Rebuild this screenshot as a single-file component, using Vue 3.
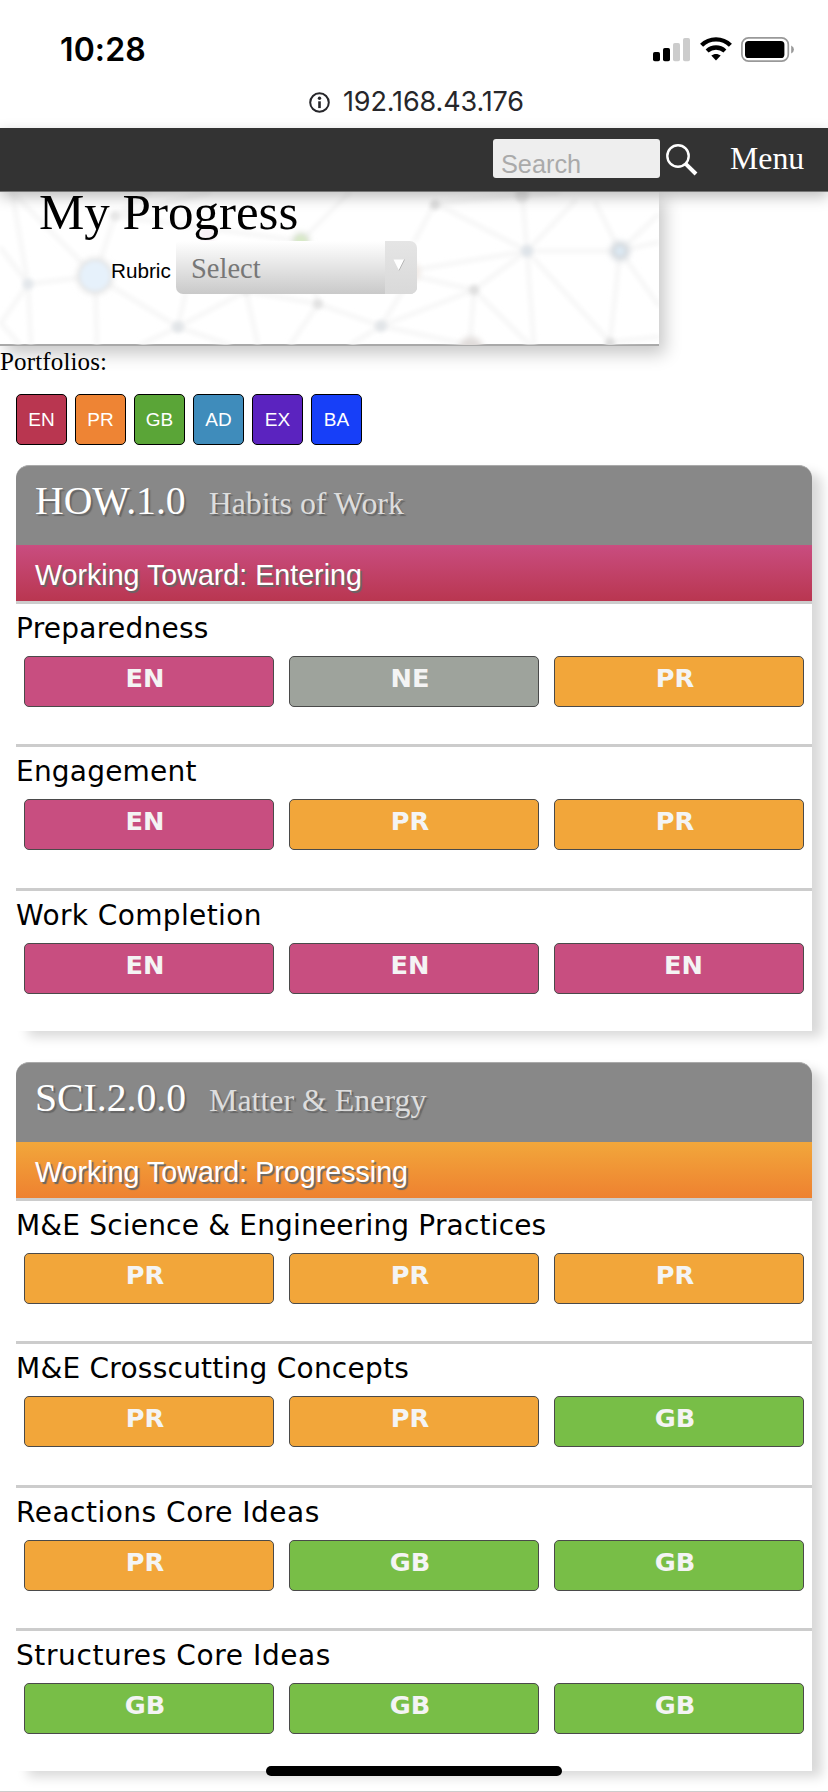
<script setup>
const portfolios = [
  { code: 'EN', tone: 'crimson' },
  { code: 'PR', tone: 'orange' },
  { code: 'GB', tone: 'green' },
  { code: 'AD', tone: 'blue' },
  { code: 'EX', tone: 'purple' },
  { code: 'BA', tone: 'royal' },
]

const cards = [
  {
    code: 'HOW.1.0',
    name: 'Habits of Work',
    goal: 'Working Toward: Entering',
    tone: 'entering',
    rows: [
      { label: 'Preparedness', tracking: 0.26, marks: ['EN', 'NE', 'PR'] },
      { label: 'Engagement', tracking: 0.2, marks: ['EN', 'PR', 'PR'] },
      { label: 'Work Completion', tracking: 0.38, marks: ['EN', 'EN', 'EN'], lastShifted: true },
    ],
  },
  {
    code: 'SCI.2.0.0',
    name: 'Matter & Energy',
    goal: 'Working Toward: Progressing',
    tone: 'progressing',
    rows: [
      { label: 'M&E Science & Engineering Practices', tracking: 0.18, marks: ['PR', 'PR', 'PR'] },
      { label: 'M&E Crosscutting Concepts', tracking: 0.24, marks: ['PR', 'PR', 'GB'] },
      { label: 'Reactions Core Ideas', tracking: 0.5, marks: ['PR', 'GB', 'GB'] },
      { label: 'Structures Core Ideas', tracking: 0.6, marks: ['GB', 'GB', 'GB'] },
    ],
  },
]
</script>

<template>
  <div class="screen">
    <header class="status">
      <span class="clock">10:28</span>
      <div class="indicators">
        <svg width="38" height="24" viewBox="0 0 38 24">
          <rect x="0" y="14" width="7" height="9.3" rx="1.8" />
          <rect x="10" y="10" width="7" height="13.3" rx="1.8" />
          <rect x="20" y="5" width="7" height="18.3" rx="1.8" fill="#ccc" />
          <rect x="30" y="0" width="7" height="23.3" rx="1.8" fill="#ccc" />
        </svg>
        <svg class="wifi" width="32" height="24" viewBox="0 0 32 24">
          <g fill="none" stroke="#000" stroke-width="4.3">
            <path d="M1.6 8.2 C9.5 .3 22.5 .3 30.4 8.2" />
            <path d="M7.1 14 C12.2 9.3 19.8 9.3 24.9 14" />
          </g>
          <path d="M11.3 18.6 C14 16.4 18 16.4 20.7 18.6 L16 23.4 Z" />
        </svg>
        <svg class="battery" width="54" height="25" viewBox="0 0 54 25">
          <rect x=".9" y=".9" width="46.4" height="23.2" rx="6.6" fill="none" stroke="#999" stroke-width="1.7" />
          <rect x="4" y="4" width="39.4" height="17" rx="3.6" />
          <path d="M50.2 8.6 Q53 10 53 12.5 Q53 15 50.2 16.4 Z" fill="#999" />
        </svg>
      </div>
    </header>

    <div class="address">
      <svg width="21" height="21" viewBox="0 0 21 21">
        <circle cx="10.5" cy="10.5" r="9.3" fill="none" stroke="#26262a" stroke-width="2" />
        <circle cx="10.5" cy="6.3" r="1.7" fill="#26262a" />
        <rect x="9.2" y="9.3" width="2.6" height="6.8" fill="#26262a" />
      </svg>
      <span>192.168.43.176</span>
    </div>

    <nav class="bar">
      <div class="search">Search</div>
      <svg class="lens" width="32" height="32" viewBox="0 0 32 32" fill="none" stroke="#fff">
        <circle cx="12" cy="12" r="10.7" stroke-width="2.4" />
        <path d="M19.7 19.8 L30 30" stroke-width="4" />
      </svg>
      <span class="menu">Menu</span>
    </nav>

    <section class="intro">
      <svg class="mesh" viewBox="0 0 659 153" width="659" height="153">
        <defs>
          <filter id="soft" x="-20%" y="-20%" width="140%" height="140%"><feGaussianBlur stdDeviation="2" /></filter>
          <filter id="glow" x="-50%" y="-50%" width="200%" height="200%"><feGaussianBlur stdDeviation="3" /></filter>
        </defs>
        <g filter="url(#soft)" stroke="#f6f6f6" stroke-width="4.5" fill="none">
          <path d="M0 55 L28 92 L95 84 M28 92 L12 0 M28 92 L31 153 M28 92 L0 132 M95 84 L12 0 M95 84 L115 24 L150 0 M95 84 L97 153 M95 84 L178 135 L140 153 M178 135 L188 90 M178 135 L246 99 L301 49 M246 99 L258 153 M178 135 L230 153 M115 24 L301 49 L318 112 M246 99 L318 112 L381 134 L414 80 M318 112 L290 153 M381 134 L350 153 M115 24 L210 0 M0 130 L20 153 M301 49 L350 0" />
          <path d="M414 50 L435 11 L527 59 L620 59 L659 50 M435 11 L560 0 M522 0 L527 59 L576 8 M595 10 L620 59 L659 22 M620 59 L659 114 M620 59 L610 150 L527 59 M610 150 L659 145 M527 59 L534 153 M527 59 L414 78 M527 59 L474 98 L414 84 M474 98 L381 134 L470 153 L474 98 L530 153" />
        </g>
        <g filter="url(#soft)">
          <circle cx="28" cy="92" r="5.5" fill="#e3e7eb" />
          <circle cx="115" cy="24" r="5" fill="#e6e6e6" />
          <circle cx="178" cy="135" r="6" fill="#e2e5e8" />
          <circle cx="318" cy="112" r="5" fill="#e2e2e2" />
          <circle cx="381" cy="134" r="6" fill="#e2e5e8" />
          <circle cx="246" cy="99" r="4" fill="#e8e8e8" />
          <circle cx="435" cy="13" r="5" fill="#dedede" />
          <circle cx="522" cy="3" r="7" fill="#e4e4e4" />
          <circle cx="527" cy="59" r="6" fill="#dfe4e9" />
          <circle cx="474" cy="98" r="5" fill="#dfdfdf" />
          <circle cx="610" cy="151" r="5" fill="#dedede" />
          <circle cx="208" cy="43" r="8" fill="#f8f1f6" />
        </g>
        <g filter="url(#glow)">
          <circle cx="95" cy="84" r="18" fill="#e3e3e3" />
          <circle cx="301" cy="49" r="9" fill="#dfe4db" />
          <circle cx="620" cy="59" r="10" fill="#d5dadf" />
          <circle cx="471" cy="157" r="12" fill="#e0dcda" />
          <circle cx="410" cy="80" r="10" fill="#f0e8e3" />
        </g>
        <g filter="url(#soft)">
          <circle cx="95" cy="84" r="15" fill="#e6f1fb" />
          <circle cx="301" cy="49" r="6" fill="#d8eac7" />
          <circle cx="620" cy="59" r="5" fill="#dbe8f2" />
        </g>
      </svg>
      <h1>My Progress</h1>
      <div class="rubric">
        <label>Rubric</label>
        <div class="select">
          <span class="value">Select</span>
          <span class="arrow">
            <svg width="12" height="12" viewBox="0 0 12 12"><path d="M.5 .5 H11.5 L6 11.5 Z" fill="#fff" /><path d="M11.5 .5 L6 11.5" stroke="#aaa" stroke-width=".8" /></svg>
          </span>
        </div>
      </div>
    </section>

    <p class="caption">Portfolios:</p>
    <div class="chips">
      <span v-for="p in portfolios" :key="p.code" class="chip" :class="p.tone">{{ p.code }}</span>
    </div>

    <article v-for="card in cards" :key="card.code" class="card">
      <h2 class="head">
        <span class="code">{{ card.code }}</span>
        <span class="name">{{ card.name }}</span>
      </h2>
      <div class="goal" :class="card.tone">{{ card.goal }}</div>
      <section v-for="row in card.rows" :key="row.label" class="row">
        <div class="label" :style="{ letterSpacing: row.tracking + 'px' }">{{ row.label }}</div>
        <div class="marks">
          <span
            v-for="(mark, i) in row.marks"
            :key="i"
            class="mark"
            :class="[mark.toLowerCase(), { shifted: row.lastShifted && i === 2 }]"
          >{{ mark }}</span>
        </div>
      </section>
    </article>

    <div class="bottom-line"></div>
    <div class="home"></div>
  </div>
</template>

<style>
body {
  margin: 0;
  background: #fff;
}
</style>

<style scoped>
.screen {
  position: relative;
  width: 828px;
  height: 1792px;
  overflow: hidden;
  background: #fff;
  color: #000;
  font-family: "Liberation Serif", serif;
}
.status {
  display: flex;
  justify-content: space-between;
  height: 86px;
  padding: 0 33px 0 60px;
  box-sizing: border-box;
}
.clock {
  font: 600 32px/100px Inter, sans-serif;
  letter-spacing: 0.1px;
}
.indicators {
  display: flex;
  align-items: flex-start;
  padding-top: 38px;
  width: 142px;
}
.indicators svg {
  flex: none;
}
.wifi {
  margin-left: 9px;
  margin-top: -1px;
}
.battery {
  margin-left: 9px;
  margin-top: -1px;
}
.address {
  display: flex;
  align-items: center;
  gap: 13px;
  height: 32px;
  padding-left: 309px;
  margin-bottom: 10px;
  font: 400 27px/32px Inter, sans-serif;
  letter-spacing: -0.13px;
  color: #26262a;
}
.address span {
  white-space: nowrap;
}
.bar {
  position: relative;
  z-index: 2;
  display: flex;
  height: 64px;
  padding-left: 493px;
  box-sizing: border-box;
  background: #333;
  border-bottom: 1px solid #777;
  box-shadow: 0 5px 13px rgba(0, 0, 0, 0.25);
}
.search {
  width: 167px;
  height: 39px;
  margin-top: 11px;
  padding: 10px 0 0 8px;
  box-sizing: border-box;
  border-radius: 3px;
  background: #eee;
  color: #aaa;
  font: 25.3px/30px "Liberation Sans", sans-serif;
  overflow: hidden;
}
.lens {
  margin: 16px 0 0 6px;
}
.menu {
  margin-left: 32px;
  font-size: 31.8px;
  line-height: 61px;
  color: #fff;
}
.intro {
  position: relative;
  width: 659px;
  height: 154px;
  box-sizing: border-box;
  border-bottom: 2px solid #a9a9a9;
  background: #fff;
  box-shadow: 6px 8px 16px rgba(0, 0, 0, 0.22);
}
.mesh {
  position: absolute;
  left: 0;
  top: 0;
}
h1 {
  position: relative;
  margin: 0;
  padding-left: 39px;
  font-weight: 400;
  font-size: 51px;
  line-height: 41px;
}
.rubric {
  position: relative;
  display: flex;
  margin-top: 8px;
  padding-left: 111px;
  height: 53px;
}
.rubric label {
  width: 65px;
  font: 20.7px/60px "Liberation Sans", sans-serif;
}
.select {
  display: flex;
  width: 241px;
  border-radius: 4px 7px 7px 7px;
  overflow: hidden;
  background: linear-gradient(#fff, #c9c9c9);
}
.value {
  flex: 1;
  padding-left: 15px;
  font-size: 28.5px;
  line-height: 55px;
  color: #777;
}
.arrow {
  display: flex;
  width: 32px;
  padding: 18px 0 0 8px;
  box-sizing: border-box;
  background: linear-gradient(#e5e5e5, #d9d9d9);
}
.caption {
  position: relative;
  margin: 0;
  font-size: 25px;
  line-height: 32px;
  letter-spacing: 0.15px;
}
.chips {
  display: flex;
  gap: 8px;
  padding: 16px 16px 20px;
}
.chip {
  width: 51px;
  height: 51px;
  box-sizing: border-box;
  border: 1.5px solid #000;
  border-radius: 5px;
  color: #fff;
  font: 19px/50px "Liberation Sans", sans-serif;
  text-align: center;
}
.crimson { background: #b93650; }
.orange { background: #ee8434; }
.green { background: #5aa537; }
.blue { background: #3f8cbb; }
.purple { background: #5b23bf; }
.royal { background: #173ff8; }
.card {
  width: 796px;
  margin: 0 0 31px 16px;
  border-radius: 13px 13px 0 0;
  background: #fff;
  box-shadow: 11px 7px 12px -1px #d9d9d9;
}
.head {
  display: flex;
  align-items: baseline;
  gap: 23px;
  height: 80px;
  margin: 0;
  padding-left: 19px;
  box-sizing: border-box;
  border-top: 1px solid #aaa;
  border-radius: 13px 13px 0 0;
  background: #888;
  font-weight: 400;
  line-height: 71px;
  text-shadow: 2px 2px 1px #666;
}
.code {
  font-size: 39.7px;
  color: #fff;
}
.name {
  font-size: 31.9px;
  color: #ddd;
}
.goal {
  height: 59px;
  padding: 4px 19px 0;
  box-sizing: border-box;
  border-bottom: 3px solid #ccc;
  color: #fff;
  font: 28.65px/52px "Liberation Sans", sans-serif;
  text-shadow: 2px 2px 1px #666;
}
.entering { background: linear-gradient(#c94d80, #b93650) padding-box; }
.progressing { background: linear-gradient(#f2a73b, #ee8130) padding-box; }
.row {
  height: 143.33px;
  box-sizing: border-box;
  border-bottom: 3px solid #ccc;
}
.row:last-child {
  height: 140.33px;
  border-bottom: 0;
}
.label {
  height: 52px;
  font: 28px/50px "DejaVu Sans", sans-serif;
  white-space: nowrap;
}
.marks {
  display: grid;
  grid-template-columns: repeat(3, 250px);
  gap: 15px;
  padding-left: 8px;
}
.mark {
  height: 51px;
  padding-right: 8px;
  box-sizing: border-box;
  border: 1.5px solid #4a4a4a;
  border-radius: 5px;
  color: #f4f4f4;
  font: bold 25.6px/42px "DejaVu Sans", sans-serif;
  text-align: center;
}
.shifted {
  padding: 0 0 0 9px;
}
.en { background: #c84e80; }
.ne { background: #9ea39c; }
.pr { background: #f2a63a; }
.gb { background: #78be47; }
.bottom-line {
  position: absolute;
  left: 0;
  right: 0;
  bottom: 0;
  height: 1px;
  background: #ccc;
}
.home {
  position: absolute;
  left: 266px;
  top: 1766px;
  width: 296px;
  height: 10px;
  border-radius: 5px;
  background: #000;
}
</style>
